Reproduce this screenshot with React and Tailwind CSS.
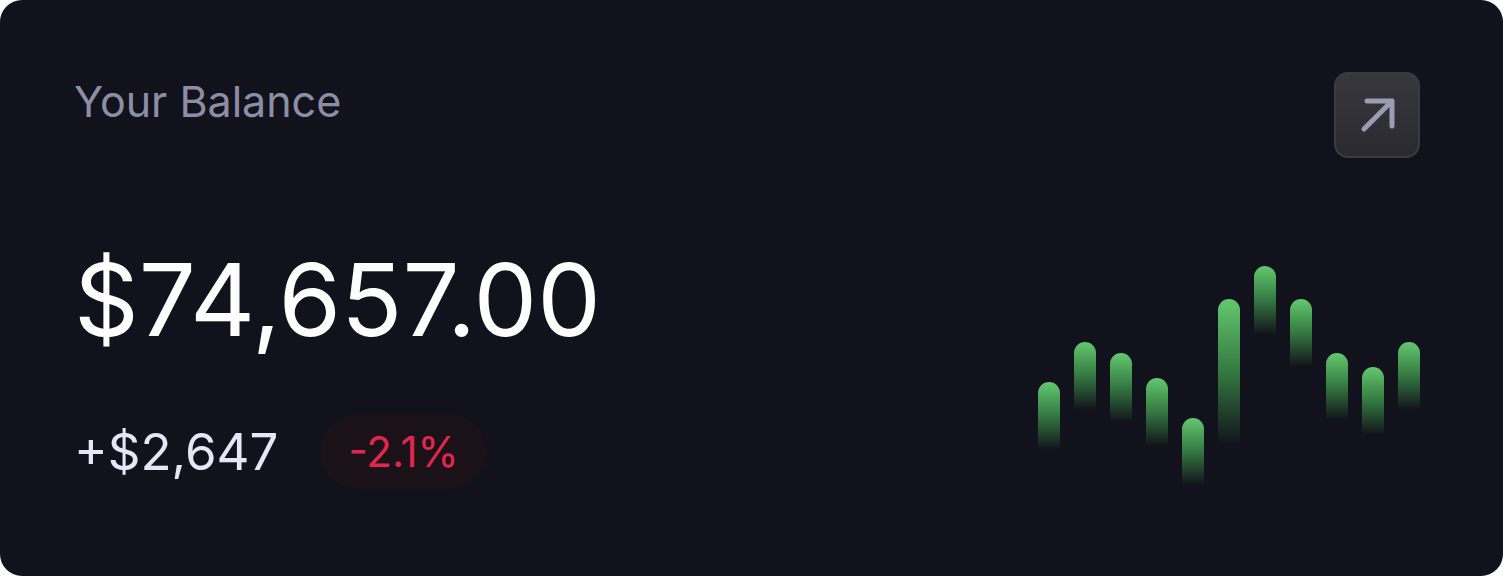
const bars = [
    { top: 116, h: 68 },
    { top: 76, h: 68 },
    { top: 87, h: 69 },
    { top: 112, h: 68 },
    { top: 152, h: 67 },
    { top: 33, h: 146 },
    { top: 0, h: 69 },
    { top: 33, h: 68 },
    { top: 87, h: 67 },
    { top: 101, h: 68 },
    { top: 76, h: 68 },
]

const ArrowIcon = () => (
    <svg width="40" height="40" viewBox="0 0 40 40" fill="none">
        <path d="M10 6H35V31M7 34L35 6" stroke="#9c9bb3" strokeWidth="5" strokeLinecap="round" strokeLinejoin="round" />
    </svg>
)

const BarChart = () => (
    <div className='flex items-start gap-[14px] h-[219px] mb-[5px]'>
        {bars.map((b, i) => (
            <div key={i}
                className='w-[22px] rounded-t-full bg-gradient-to-b from-[#63c86f] via-[#3f9a4d]/75 to-[#2a6b36]/0'
                style={{ marginTop: b.top, height: b.h }} />
        ))}
    </div>
)

export default function App() {
    return (
        <div className='w-[1503px] h-[576px] bg-white' style={{ fontFamily: 'Inter, "Noto Sans", sans-serif' }}>
            <div className='w-full h-full rounded-[22px] bg-[#11121b] flex justify-between pl-[74px] pr-[83px] pt-[72px] pb-[86px]'>
                <div className='flex flex-col'>
                    <span className='text-[43px] leading-none mt-[8px] text-[#8d8ea6]'>Your Balance</span>
                    <span className='text-[101px] leading-none mt-[126px] text-white'>$74,657.00</span>
                    <div className='flex items-center gap-[42px] mt-[64px]'>
                        <span className='text-[51px] leading-none text-[#e6e7f5]'>+$2,647</span>
                        <div className='h-[75px] px-[28px] rounded-full bg-[#1a1119] flex items-center'>
                            <span className='text-[42px] leading-none text-[#e3264d]'>-2.1%</span>
                        </div>
                    </div>
                </div>
                <div className='flex flex-col items-end justify-between'>
                    <button className='w-[86px] h-[86px] rounded-[14px] border-2 border-[#3a3a41] bg-gradient-to-b from-[#37373d] to-[#2a2a30] flex items-center justify-center'>
                        <ArrowIcon />
                    </button>
                    <BarChart />
                </div>
            </div>
        </div>
    )
}
